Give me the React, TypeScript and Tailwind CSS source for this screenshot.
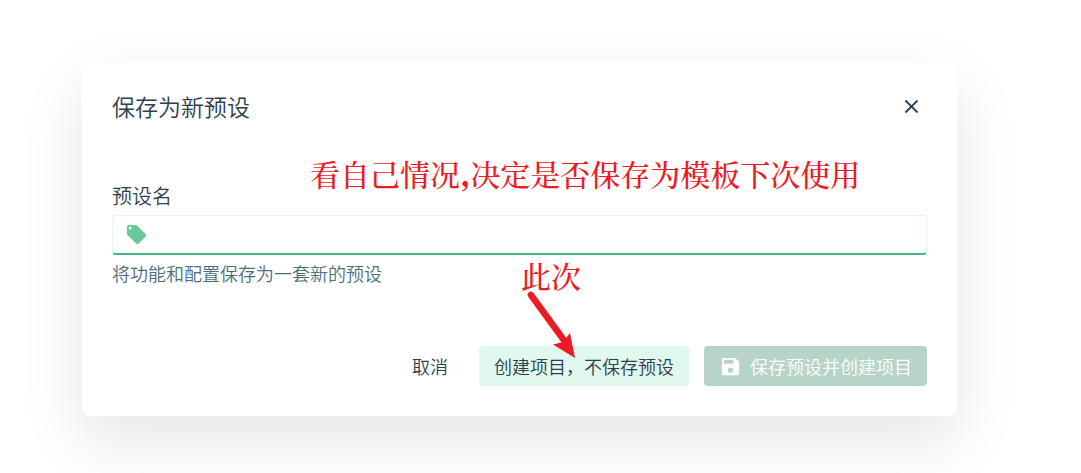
import React, { useState } from "react";
import { MdClose, MdLocalOffer, MdSave } from "react-icons/md";

function Note({ children, className }: { children: React.ReactNode; className: string }) {
  return (
    <p
      className={`pointer-events-none absolute whitespace-nowrap font-['Noto_Serif_CJK_SC','Noto_Sans_CJK_SC',serif] text-[30px] leading-9 font-medium text-[#ed1c24] ${className}`}
    >
      {children}
    </p>
  );
}

export default function App() {
  const [name, setName] = useState("");

  return (
    <main className="overflow-hidden bg-white pt-[62px] pr-[124px] pb-[57px] pl-[82px] font-['Noto_Sans_CJK_SC',sans-serif] font-[350] text-[#2c3e50]">
      <section
        role="dialog"
        aria-labelledby="dialog-title"
        className="relative rounded-lg bg-white px-[30px] pt-7 pb-[30px] shadow-[0_25px_64px_rgba(0,0,0,0.1)]"
      >
        <header className="flex h-8 items-center justify-between">
          <h1 id="dialog-title" className="text-[23px] leading-8 font-[350]">
            保存为新预设
          </h1>
          <button type="button" aria-label="关闭" className="flex size-8 items-center justify-center">
            <MdClose size={23} />
          </button>
        </header>

        <form onSubmit={(e) => e.preventDefault()}>
          <label htmlFor="preset-name" className="mt-15 block text-[20px] leading-7">
            预设名
          </label>
          <div className="mt-[5px] flex h-10 items-center rounded-[4px] border border-b-2 border-[#e0f8ed] border-b-[#42b983] px-3">
            <MdLocalOffer size={23} className="shrink-0 text-[#68c89c]" />
            <input
              id="preset-name"
              type="text"
              value={name}
              onChange={(e) => setName(e.target.value)}
              aria-describedby="preset-hint"
              className="ml-2 min-w-0 flex-1 bg-transparent text-[18px] outline-none"
            />
          </div>
          <p id="preset-hint" className="mt-1 text-[18px] leading-7 text-[#4e6e7e]">
            将功能和配置保存为一套新的预设
          </p>

          <footer className="mt-[59px] flex justify-end gap-[15px] text-[18px] leading-10">
            <button type="button" className="px-4">
              取消
            </button>
            <button type="button" className="rounded-[4px] bg-[#e0f8ed] px-[15px]">
              创建项目，不保存预设
            </button>
            <button
              type="submit"
              disabled
              className="flex items-center gap-2 rounded-[4px] bg-[#b6d5c8] px-[15px] text-white"
            >
              <MdSave size={23} />
              保存预设并创建项目
            </button>
          </footer>
        </form>

        <Note className="top-[93px] left-[228px]">
          看自己情况<span className="font-black">,</span>决定是否保存为模板下次使用
        </Note>
        <Note className="top-[195px] left-[439px]">此次</Note>
        <svg
          aria-hidden="true"
          className="pointer-events-none absolute top-[228px] left-[443px]"
          width="56"
          height="70"
          viewBox="0 0 56 70"
        >
          <path d="M6 5 41 53" stroke="#ed1c24" strokeWidth="6.5" strokeLinecap="round" />
          <path d="M50 68 28 54.5 38 52 45 43Z" fill="#ed1c24" />
        </svg>
      </section>
    </main>
  );
}
